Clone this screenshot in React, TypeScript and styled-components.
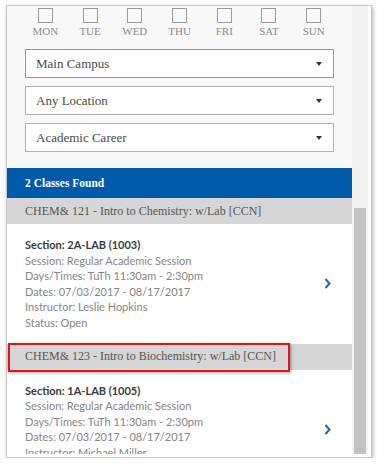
import React from 'react';
import styled, { createGlobalStyle } from 'styled-components';

const GlobalStyle = createGlobalStyle`
  body {
    margin: 0;
    background: #ffffff;
  }
`

const Frame = styled.div`
  margin: 5px 0 0 6px;
  width: 366px;
  height: 453px;
  box-sizing: border-box;
  border: 1px solid #c9c9c9;
  box-shadow: 1px 2px 4px rgba(0, 0, 0, 0.3);
  background: #ffffff;
  padding: 0 3px 3px 0;
  display: flex;
`

const Viewport = styled.div`
  width: 347px;
  height: 100%;
  overflow: hidden;
  background: #f8f8f8;
`

const Track = styled.div`
  width: 16px;
  height: 100%;
  background: #f1f1f1;
  padding: 202px 2px 0;
  box-sizing: border-box;
`

const Thumb = styled.div`
  height: 100%;
  background: #c1c1c1;
`

const DaysRow = styled.div`
  display: grid;
  grid-template-columns: repeat(7, 1fr);
  padding: 2px 16px 0;
`

const Day = styled.label`
  display: flex;
  flex-direction: column;
  align-items: center;
  font-family: "Liberation Serif", serif;
  font-size: 11px;
  line-height: 12px;
  color: #8a8a8a;
`

const Box = styled.span`
  width: 15px;
  height: 15px;
  box-sizing: border-box;
  border: 1.5px solid #9a9a9a;
  background: #f8f8f8;
  margin-bottom: 2px;
`

const Filters = styled.div`
  display: flex;
  flex-direction: column;
  gap: 8px;
  padding: 12px 18px 16px;
`

const Select = styled.div<{ $focused?: boolean }>`
  height: 29px;
  box-sizing: border-box;
  border: 1.5px solid ${p => (p.$focused ? '#6a9ed6' : '#b0b0b0')};
  background: #ffffff;
  display: flex;
  align-items: center;
  justify-content: space-between;
  padding: 0 11px 0 10px;
  font-family: "Liberation Serif", serif;
  font-size: 13px;
  color: #4a4a4a;
`

const Caret = styled.span`
  width: 0;
  height: 0;
  border-left: 3px solid transparent;
  border-right: 3px solid transparent;
  border-top: 4px solid #333333;
`

const FoundBar = styled.div`
  height: 30px;
  background: #0059a9;
  color: #ffffff;
  display: flex;
  align-items: center;
  padding-left: 18px;
  font-family: "Liberation Serif", serif;
  font-size: 11.5px;
  font-weight: bold;
`

const CourseHeader = styled.div`
  position: relative;
  height: 26px;
  background: #d6d6d6;
  display: flex;
  align-items: center;
  padding-left: 18px;
  font-family: "Liberation Serif", serif;
  font-size: 12px;
  color: #555555;
`

const Highlight = styled.span`
  position: absolute;
  left: 1px;
  top: -1px;
  width: 282px;
  height: 29px;
  box-sizing: border-box;
  border: 2px solid #e0141b;
  box-shadow: 1px 1px 3px rgba(0, 0, 0, 0.35);
`

const SectionRow = styled.div`
  background: #ffffff;
  display: flex;
  align-items: center;
  justify-content: space-between;
  padding: 13px 21px 13px 18px;
`

const Details = styled.div`
  font-family: Lato, "Liberation Sans", sans-serif;
  font-size: 11px;
  line-height: 15.6px;
  color: #858585;
`

const SectionTitle = styled.div`
  font-weight: bold;
  color: #3a3a3a;
`

const Chevron = () => (
  <svg width="7" height="11" viewBox="0 0 7 11">
    <path d="M1.5 1 L5.5 5.5 L1.5 10" fill="none" stroke="#1a67bd" strokeWidth="2" />
  </svg>
)

const days = ['MON', 'TUE', 'WED', 'THU', 'FRI', 'SAT', 'SUN'];

const sections = [
  {
    course: 'CHEM& 121 - Intro to Chemistry: w/Lab [CCN]',
    section: 'Section: 2A-LAB (1003)',
    instructor: 'Leslie Hopkins',
    highlight: false,
  },
  {
    course: 'CHEM& 123 - Intro to Biochemistry: w/Lab [CCN]',
    section: 'Section: 1A-LAB (1005)',
    instructor: 'Michael Miller',
    highlight: true,
  },
];

const App = () => {
  return (
    <>
      <GlobalStyle />
      <Frame>
        <Viewport>
          <DaysRow>
            {days.map(d => (
              <Day key={d}>
                <Box />
                {d}
              </Day>
            ))}
          </DaysRow>
          <Filters>
            <Select $focused>Main Campus<Caret /></Select>
            <Select>Any Location<Caret /></Select>
            <Select>Academic Career<Caret /></Select>
          </Filters>
          <FoundBar>2 Classes Found</FoundBar>
          {sections.map(s => (
            <React.Fragment key={s.section}>
              <CourseHeader>
                {s.highlight && <Highlight />}
                {s.course}
              </CourseHeader>
              <SectionRow>
                <Details>
                  <SectionTitle>{s.section}</SectionTitle>
                  <div>Session: Regular Academic Session</div>
                  <div>Days/Times: TuTh 11:30am - 2:30pm</div>
                  <div>Dates: 07/03/2017 - 08/17/2017</div>
                  <div>Instructor: {s.instructor}</div>
                  <div>Status: Open</div>
                </Details>
                <Chevron />
              </SectionRow>
            </React.Fragment>
          ))}
        </Viewport>
        <Track>
          <Thumb />
        </Track>
      </Frame>
    </>
  );
}
export default App;
